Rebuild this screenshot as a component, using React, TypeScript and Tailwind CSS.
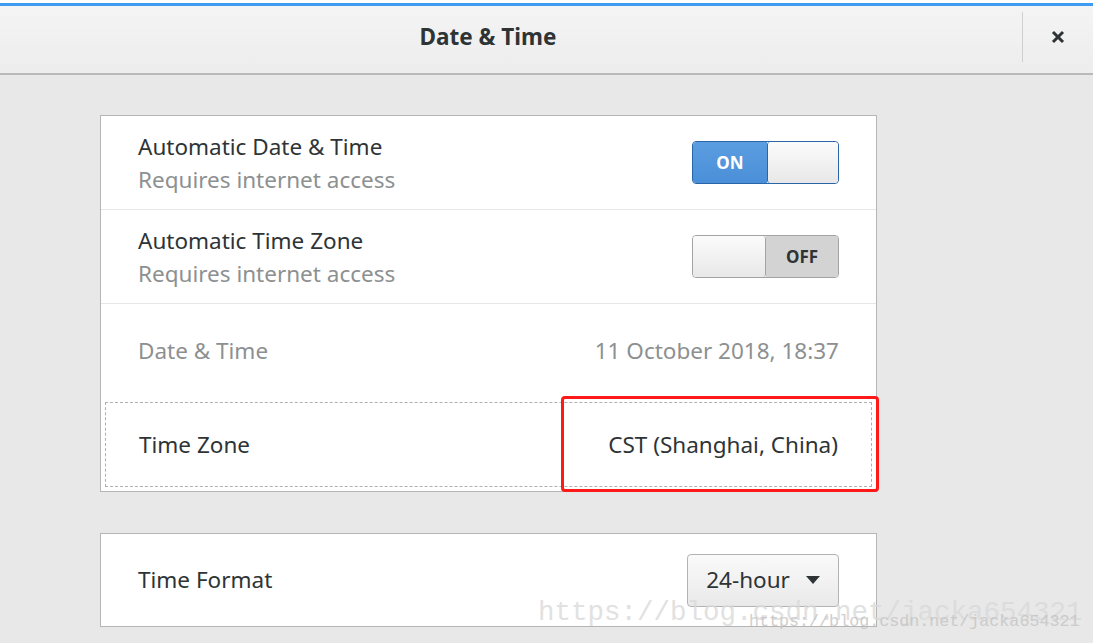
import React from "react";

const font = { fontFamily: '"Noto Sans", "Open Sans", sans-serif' };

function Switch({ on }: { on: boolean }) {
  if (on) {
    return (
      <div className="flex h-[43px] w-[147px] overflow-hidden rounded-[4px] border border-[#2a65a8]">
        <div className="flex w-[74px] items-center justify-center bg-gradient-to-b from-[#5b9de0] to-[#4a8fd8] text-[17px] font-bold text-white">
          ON
        </div>
        <div className="flex-1 rounded-[3px] border-l border-[#2a65a8] bg-gradient-to-b from-[#fbfbfb] to-[#e8e8e8]" />
      </div>
    );
  }
  return (
    <div className="flex h-[43px] w-[147px] overflow-hidden rounded-[4px] border border-[#a3a3a3]">
      <div className="w-[73px] rounded-[3px] border-r border-[#a3a3a3] bg-gradient-to-b from-[#fbfbfb] to-[#e8e8e8]" />
      <div className="flex flex-1 items-center justify-center bg-[#d3d3d3] text-[17px] font-bold text-[#2e3436]">
        OFF
      </div>
    </div>
  );
}

export default function App() {
  return (
    <div className="relative flex h-[643px] w-[1093px] flex-col overflow-hidden bg-[#e8e8e8]" style={font}>
      <div className="h-[3px] bg-white" />
      <div className="h-[3px] bg-[#3d9bf0]" />
      <div className="flex h-[69px] items-center border-b-2 border-[#b9b9b9] bg-gradient-to-b from-[#f4f4f4] to-[#ededed] pb-[6px]">
        <div className="flex-1 pr-[46px] text-center text-[22.5px] font-bold text-[#2e3436]">Date &amp; Time</div>
        <div className="h-[50px] w-px self-start mt-[6px] bg-[#cfcfcf]" />
        <div className="flex w-[70px] items-center justify-center">
          <svg width="14" height="14" viewBox="0 0 14 14">
            <path d="M2 2 L12 12 M12 2 L2 12" stroke="#2e3436" strokeWidth="3" strokeLinecap="butt" />
          </svg>
        </div>
      </div>

      <div className="flex w-[977px] flex-col px-[100px] pt-[40px]">
        <div className="flex flex-col border border-[#b5b5b5] bg-white">
          <div className="flex h-[94px] items-center justify-between border-b border-[#e6e6e6] pl-[37px] pr-[37px]">
            <div className="flex flex-col gap-[2px] text-[22.5px] leading-[31px]">
              <span className="text-[#2e3436]">Automatic Date &amp; Time</span>
              <span className="text-[#8d9091]">Requires internet access</span>
            </div>
            <Switch on />
          </div>
          <div className="flex h-[94px] items-center justify-between border-b border-[#e6e6e6] pl-[37px] pr-[37px]">
            <div className="flex flex-col gap-[2px] text-[22.5px] leading-[31px]">
              <span className="text-[#2e3436]">Automatic Time Zone</span>
              <span className="text-[#8d9091]">Requires internet access</span>
            </div>
            <Switch on={false} />
          </div>
          <div className="flex h-[94px] items-center justify-between pl-[37px] pr-[37px] text-[22.5px] text-[#8d9091]">
            <span>Date &amp; Time</span>
            <span>11 October 2018, 18:37</span>
          </div>
          <div className="flex h-[93px] p-[4px]">
            <div className="flex flex-1 items-center justify-between border border-dashed border-[#b0b0b0] pl-[33px] pr-[33px] text-[22.5px] text-[#2e3436]">
              <span>Time Zone</span>
              <span>CST (Shanghai, China)</span>
            </div>
          </div>
        </div>

        <div className="mt-[41px] flex h-[94px] items-center justify-between border border-[#b5b5b5] bg-white pl-[37px] pr-[37px]">
          <span className="text-[22.5px] text-[#2e3436]">Time Format</span>
          <div className="flex h-[53px] w-[152px] items-center justify-center gap-[16px] rounded-[4px] border border-[#b3b3b3] bg-gradient-to-b from-[#fafafa] to-[#e9e9e9] text-[22.5px] text-[#2e3436]">
            <span>24-hour</span>
            <svg width="14" height="8" viewBox="0 0 14 8">
              <path d="M0 0 L14 0 L7 8 Z" fill="#2e3436" />
            </svg>
          </div>
        </div>
      </div>

      <div className="pointer-events-none absolute left-[561px] top-[396px] h-[96px] w-[318px] rounded-[4px] border-[3px] border-[#ff1a1a]" />

      <div
        className="pointer-events-none absolute left-[538px] top-[593px] whitespace-nowrap text-[27.5px] leading-[40px] text-[#dadada] opacity-80"
        style={{ fontFamily: '"Liberation Mono", "DejaVu Sans Mono", monospace' }}
      >
        https://blog.csdn.net/jacka654321
      </div>
      <div
        className="pointer-events-none absolute left-[749px] top-[611px] whitespace-nowrap text-[16.7px] leading-[22px] text-[#c4c4c4] opacity-80"
        style={{ fontFamily: '"Liberation Mono", "DejaVu Sans Mono", monospace' }}
      >
        https://blog.csdn.net/jacka654321
      </div>
    </div>
  );
}
